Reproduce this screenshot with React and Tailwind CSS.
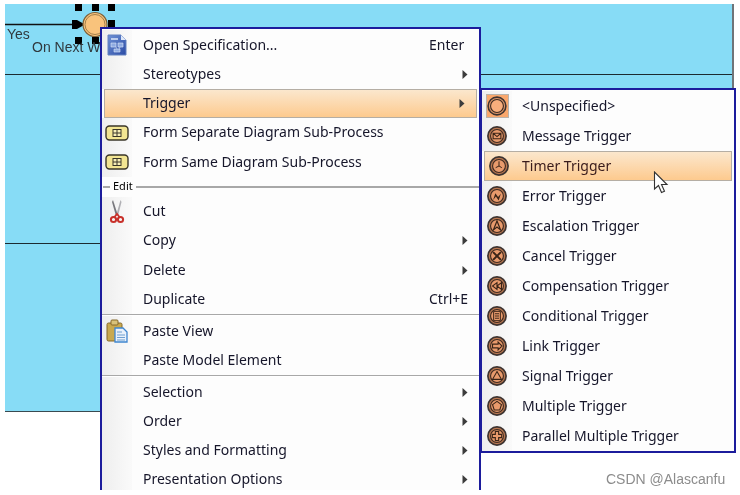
import React from 'react'

const SpecIcon = () => (
  <svg width="20" height="22" viewBox="0 0 20 22">
    <defs>
      <linearGradient id="spec" x1="0" y1="0" x2="1" y2="1">
        <stop offset="0" stopColor="#6f92d6" />
        <stop offset="1" stopColor="#2a4aa4" />
      </linearGradient>
    </defs>
    <path d="M1 1h13l5 5v15H1z" fill="url(#spec)" stroke="#6482c0" />
    <path d="M14 1v5h5z" fill="#dfe8f8" />
    <path d="M4 5h7" stroke="#dfe8f8" strokeWidth="1.500" />
    <path d="M4 9h5v4H4zM11 9h5v4h-5zM7 15h6v3H7zM9 13l1 2M13 13l-1 2" fill="#8fabe2" stroke="#dce6f8" strokeWidth="0.600" />
  </svg>
)

const SubProcessIcon = () => (
  <svg width="24" height="16" viewBox="0 0 24 16">
    <rect x="1" y="1" width="22" height="14" rx="3.500" fill="#f2e592" stroke="#3a3628" strokeWidth="1.400" />
    <rect x="8" y="4.500" width="8" height="7" fill="#f7efb8" stroke="#3a3628" />
    <path d="M12 4.500v7M8 8h8" stroke="#3a3628" />
  </svg>
)

const ScissorsIcon = () => (
  <svg width="16" height="24" viewBox="0 0 16 24">
    <path d="M4 0l4.500 14-1.500 2L3 2z" fill="#77777c" />
    <path d="M11.500 0L7.500 14 9 16l3.500-14z" fill="#b0b0b4" />
    <circle cx="4.500" cy="19.500" r="2.600" fill="none" stroke="#c8302a" strokeWidth="2" />
    <circle cx="11.500" cy="19.500" r="2.600" fill="none" stroke="#c8302a" strokeWidth="2" />
    <path d="M5.500 17l2.500-3 2.500 3" fill="none" stroke="#c8302a" strokeWidth="1.800" />
  </svg>
)

const PasteIcon = () => (
  <svg width="22" height="24" viewBox="0 0 22 24">
    <rect x="1" y="4" width="15" height="18" rx="1.500" fill="#c9a94f" stroke="#85692a" />
    <rect x="5" y="1" width="7" height="5" rx="1" fill="#d8c27a" stroke="#85692a" />
    <path d="M9 9h8l4 4v10H9z" fill="#e9f1fb" stroke="#3f86d0" strokeWidth="1.300" />
    <path d="M11 13h5M11 16h8M11 18.500h8M11 21h8" stroke="#6f9fd0" />
  </svg>
)

const Glyphs = {
  message: <path d="M5.500 6.500h7v5h-7zM5.500 6.500L9 9.500l3.500-3" fill="none" stroke="#3a2417" strokeWidth="1" />,
  timer: <path d="M9 4.800V9l-3 1.500M9 9l2.500 1.500" fill="none" stroke="#3a2417" strokeWidth="0.900" />,
  error: <path d="M5.500 12.500l2-6 2.500 3.500 2.500-3-2 6-2.500-3.500z" fill="#3a2417" />,
  escalation: <path d="M9 4.500l3.200 8L9 10l-3.200 2.500z" fill="none" stroke="#3a2417" strokeWidth="1.100" />,
  cancel: <path d="M5.500 5.500l7 7M12.500 5.500l-7 7" stroke="#3a2417" strokeWidth="1.800" />,
  compensation: <path d="M9 6L5 9l4 3zM13 6L9 9l4 3z" fill="none" stroke="#3a2417" strokeWidth="1" />,
  conditional: <path d="M6 4.800h6v8.400H6zM7.200 7h3.600M7.200 9h3.600M7.200 11h3.600" fill="none" stroke="#3a2417" strokeWidth="0.900" />,
  link: <path d="M5 7.300h5V5.500L13.500 9 10 12.500v-1.800H5z" fill="none" stroke="#3a2417" strokeWidth="1" />,
  signal: <path d="M9 5l4 7H5z" fill="none" stroke="#3a2417" strokeWidth="1" />,
  multiple: <path d="M9 4.800l4 3-1.500 4.800h-5L5 7.800z" fill="none" stroke="#3a2417" strokeWidth="1" />,
  parallel: <path d="M7.500 4.800h3v2.700h2.700v3h-2.700v2.700h-3v-2.700H4.800v-3h2.700z" fill="none" stroke="#3a2417" strokeWidth="1" />,
}

const TriggerIcon = ({ type }) => (
  <svg width="20" height="20" viewBox="0 0 18 18">
    <circle cx="9" cy="9" r="8.200" fill="#b97750" stroke="#3d3330" strokeWidth="1.500" />
    <circle cx="9" cy="9" r="5.800" fill="#e89a6c" stroke="#3d2a20" strokeWidth="1" />
    {Glyphs[type]}
  </svg>
)

const UnspecifiedIcon = () => (
  <span className="flex h-[24px] w-[23px] items-center justify-center border border-[#b9b2aa] bg-[#f9a76c]">
    <svg width="20" height="20" viewBox="0 0 18 18">
      <circle cx="9" cy="9" r="8" fill="#e0976a" stroke="#3d3330" strokeWidth="1.400" />
      <circle cx="9" cy="9" r="5.800" fill="#f9ae7c" stroke="#3d2a20" strokeWidth="1" />
    </svg>
  </span>
)

const Arrow = () => (
  <svg width="6" height="9" viewBox="0 0 6 9">
    <path d="M0.500 0l5 4.500-5 4.500z" fill="#3c3c3c" />
  </svg>
)

const MenuRow = ({ label, icon, shortcut, arrow, active }) => (
  <div
    className={`flex h-[29.3px] items-center ${
      active ? 'mx-[2px] border border-[#b5aea4] bg-gradient-to-b from-[#fbe7cd] to-[#fdca8e]' : ''
    }`}
  >
    <div
      className={`flex h-full shrink-0 items-center justify-center ${active ? 'w-[27px]' : 'w-[30px] bg-gradient-to-r from-[#eeeeee] to-[#fafafa]'}`}
    >
      {icon}
    </div>
    <span className="flex-1 pb-[2px] pl-[11px] text-[#16162a]">{label}</span>
    <span className={`flex w-[50px] items-center ${arrow ? 'justify-end pr-[11px]' : 'pb-[2px] text-[#16162a]'}`}>
      {shortcut}
      {arrow && <Arrow />}
    </span>
  </div>
)

const Separator = ({ label }) =>
  label ? (
    <div className="flex h-[20px] items-center">
      <div className="ml-px h-[2px] w-[7px] bg-[#a8a8a8]" />
      <span className="px-[3px] pb-[2px] text-[11px] leading-none text-black">{label}</span>
      <div className="h-[2px] flex-1 bg-[#a8a8a8]" />
    </div>
  ) : (
    <div className="h-[2.400px] border-b border-white bg-[#a8a8a8]" />
  )

const triggers = [
  ['Message Trigger', 'message'],
  ['Timer Trigger', 'timer'],
  ['Error Trigger', 'error'],
  ['Escalation Trigger', 'escalation'],
  ['Cancel Trigger', 'cancel'],
  ['Compensation Trigger', 'compensation'],
  ['Conditional Trigger', 'conditional'],
  ['Link Trigger', 'link'],
  ['Signal Trigger', 'signal'],
  ['Multiple Trigger', 'multiple'],
  ['Parallel Multiple Trigger', 'parallel'],
]

const SubRow = ({ label, icon, active }) => (
  <div
    className={`flex h-[30px] items-center ${
      active ? 'mx-[2px] border border-[#b5aea4] bg-gradient-to-b from-[#fbe7cd] to-[#fdca8e]' : ''
    }`}
  >
    <div
      className={`flex h-full shrink-0 items-center justify-center ${active ? 'w-[27px]' : 'w-[30px] bg-gradient-to-r from-[#eeeeee] to-[#fafafa]'}`}
    >
      {icon}
    </div>
    <span className={`pb-[2px] pl-[10px] ${active ? 'text-[#3a1c1c]' : 'text-[#16162a]'}`}>{label}</span>
  </div>
)

const DiagramNode = () => (
  <svg className="absolute left-0 top-0" width="128" height="50" viewBox="0 0 128 50">
    <path d="M0 20.500h68" stroke="#111" strokeWidth="1.500" />
    <path d="M67 16h5l8 4.500-8 4.500h-5z" fill="#000" />
    <g fill="#000">
      <rect x="70" y="0" width="7" height="7" />
      <rect x="87" y="0" width="7" height="7" />
      <rect x="103" y="0" width="7" height="7" />
      <rect x="103" y="16" width="7" height="7" />
      <rect x="70" y="33" width="7" height="7" />
      <rect x="87" y="33" width="7" height="7" />
    </g>
    <circle cx="90" cy="20.500" r="12" fill="#f9c37c" stroke="#7c6038" strokeWidth="1.200" />
    <circle cx="90" cy="20.500" r="10" fill="none" stroke="#8d6d3e" strokeWidth="0.800" />
  </svg>
)

export default function App() {
  return (
    <div className="relative h-[495px] w-[740px] overflow-hidden bg-white font-['Noto_Sans',sans-serif] text-[14px] blur-[0.4px]">
      <div className="relative ml-[5px] pt-[4px]">
        <div className="relative w-[729px] border-r-2 border-[#6f7478] bg-[#87dcf6]">
          <div className="h-[71px] border-b border-[#1c2a30]" />
          <div className="h-[169px] border-b border-[#1c2a30]" />
          <div className="h-[168px] border-b border-[#3a4a50]" />
          <DiagramNode />
          <span className="absolute left-[2px] top-[23px] font-['Liberation_Sans',sans-serif] text-[14px] leading-none text-[#30393e]">Yes</span>
          <span className="absolute left-[27px] top-[36px] font-['Liberation_Sans',sans-serif] text-[14px] leading-none text-[#30393e]">On Next W</span>
        </div>
      </div>

      <div className="absolute left-[100px] top-[27px] h-[463px] w-[381px] overflow-hidden border-x-2 border-t-2 border-[#1c1c9c] bg-[#fdfdfd] pt-[1.400px]">
        <MenuRow label="Open Specification..." icon={<SpecIcon />} shortcut="Enter" />
        <MenuRow label="Stereotypes" arrow />
        <MenuRow label="Trigger" arrow active />
        <MenuRow label="Form Separate Diagram Sub-Process" icon={<SubProcessIcon />} />
        <MenuRow label="Form Same Diagram Sub-Process" icon={<SubProcessIcon />} />
        <Separator label="Edit" />
        <MenuRow label="Cut" icon={<ScissorsIcon />} />
        <MenuRow label="Copy" arrow />
        <MenuRow label="Delete" arrow />
        <MenuRow label="Duplicate" shortcut="Ctrl+E" />
        <Separator />
        <MenuRow label="Paste View" icon={<PasteIcon />} />
        <MenuRow label="Paste Model Element" />
        <Separator />
        <MenuRow label="Selection" arrow />
        <MenuRow label="Order" arrow />
        <MenuRow label="Styles and Formatting" arrow />
        <MenuRow label="Presentation Options" arrow />
      </div>

      <div className="absolute left-[480px] top-[88px] w-[256px] border-2 border-[#1c1c9c] bg-[#fdfdfd] pt-px">
        <SubRow label="<Unspecified>" icon={<UnspecifiedIcon />} />
        {triggers.map(([label, type]) => (
          <SubRow key={type} label={label} icon={<TriggerIcon type={type} />} active={type === 'timer'} />
        ))}
      </div>

      <svg className="absolute left-[653px] top-[171px]" width="18" height="24" viewBox="0 0 18 24">
        <path d="M1.500 1v17l4-3.500 3 7 3-1.300-3-6.700h5.500z" fill="#fff" stroke="#333" strokeWidth="1.100" />
      </svg>

      <span className="absolute left-[606px] top-[472px] font-['Liberation_Sans',sans-serif] text-[14px] leading-none text-[#8c8c8c]">CSDN @Alascanfu</span>
    </div>
  )
}
